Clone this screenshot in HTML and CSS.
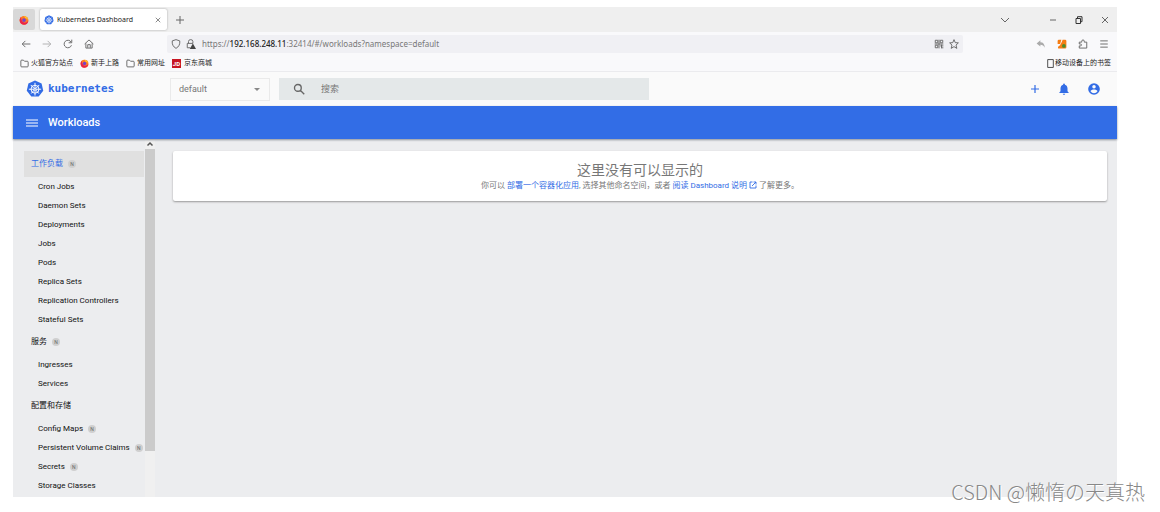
FILE: index.html
```html
<!DOCTYPE html>
<html lang="zh-CN">
<head>
<meta charset="utf-8">
<title>Kubernetes Dashboard</title>
<link rel="stylesheet" href="styles.css">
</head>
<body>
<svg class="defs" aria-hidden="true">
  <symbol id="helm" viewBox="0 0 24 24">
    <path fill="#326ce5" d="M12 .6l8.8 4.2 2.2 9.5-6.1 7.6H7.100L1 14.300l2.200-9.500z"/>
    <g fill="none" stroke="#fff" stroke-width="1.300"><circle cx="12" cy="12.300" r="5.300"/><circle cx="12" cy="12.300" r="1.400"/>
    <path d="M12 11V3.800M12 13.700v7M10.700 12.300H3.800M13.300 12.300h6.900M11 11.300L6.300 6.600M13 11.300l4.700-4.700M11 13.300L7 18M13 13.300l4 4.700"/></g>
  </symbol>
  <symbol id="folder" viewBox="0 0 16 16"><path fill="none" stroke="#555" stroke-width="1.500" d="M1.500 3.500q0-1.500 1.500-1.500h3l2 2h5q1.500 0 1.500 1.500v7q0 1.500-1.500 1.500H3q-1.500 0-1.500-1.500z"/></symbol>
  <symbol id="fox" viewBox="0 0 16 16"><circle cx="8" cy="8.500" r="7" fill="#ff7a22"/><path fill="#e8224c" d="M1 7q0 8 7 8.500Q14 15 15 9q-3 4-7 3T3 3z"/><path fill="#ffc928" d="M8 1q6 2 7 7-2-3-5-3z"/><circle cx="8" cy="8" r="3" fill="#7542c8"/></symbol>
</svg>
<div class="window">
  <div class="tabs">
    <button class="fox-view" aria-label="Firefox View"><svg class="i10"><use href="#fox"/></svg></button>
    <div class="tab"><svg class="i10"><use href="#helm"/></svg><span class="tab-title">Kubernetes Dashboard</span>
      <button class="icon-btn" aria-label="关闭标签页"><svg class="i6" viewBox="0 0 8 8"><path class="line" d="M1 1l6 6M7 1L1 7"/></svg></button></div>
    <button class="icon-btn new-tab" aria-label="新标签页"><svg class="i8" viewBox="0 0 8 8"><path class="line" d="M4 0v8M0 4h8"/></svg></button>
    <div class="win-ctl">
      <button class="icon-btn" aria-label="列出标签页"><svg class="i8" viewBox="0 0 8 8"><path class="line" d="M0 2l4 4 4-4"/></svg></button>
      <button class="icon-btn gap-before" aria-label="最小化"><svg class="i8" viewBox="0 0 8 8"><path class="line" d="M1 4h6"/></svg></button>
      <button class="icon-btn" aria-label="还原"><svg class="i8" viewBox="0 0 8 8"><path class="line dark" d="M1 2.500h4.500v5H1zM2.500 2.500V.700H7v5H5.500"/></svg></button>
      <button class="icon-btn" aria-label="关闭"><svg class="i8" viewBox="0 0 8 8"><path class="line" d="M1 1l6 6M7 1L1 7"/></svg></button>
    </div>
  </div>
  <div class="toolbar">
    <div class="nav-btns">
      <button class="icon-btn" aria-label="后退"><svg class="i10" viewBox="0 0 16 16"><path class="line2" d="M15 8H2M7 3L2 8l5 5"/></svg></button>
      <button class="icon-btn faint" aria-label="前进"><svg class="i10" viewBox="0 0 16 16"><path class="line2" d="M1 8h13M9 3l5 5-5 5"/></svg></button>
      <button class="icon-btn" aria-label="刷新"><svg class="i10" viewBox="0 0 16 16"><path class="line2" d="M13.500 10A6 6 0 1 1 13 5M14 1v5H9"/></svg></button>
      <button class="icon-btn" aria-label="主页"><svg class="i10" viewBox="0 0 16 16"><path class="line2" d="M1 8l7-6.500L15 8M3 7v7.500h10V7M6 14V9h4v5"/></svg></button>
    </div>
    <div class="url">
      <svg class="i10" viewBox="0 0 16 16"><path class="line2" d="M8 1l6 2q1 8-6 12Q1 11 2 3z"/></svg>
      <svg class="i10" viewBox="0 0 16 16"><path class="line2" d="M4 7V4q0-3 3.500-3T11 4v3M7 14H2V7h9"/><path fill="#444" d="M11 7l5 9H6z"/></svg>
      <div class="url-text" role="textbox" aria-label="网址" contenteditable="true" spellcheck="false">https://<b>192.168.248.11</b>:32414/#/workloads?namespace=default</div>
      <button class="icon-btn" aria-label="二维码"><svg class="i10" viewBox="0 0 16 16"><path class="line2" d="M2 2h4v4H2zM10 2h4v4h-4zM2 10h4v4H2zM8 1v14M1 8h14M10 11h5M12 9v6M14 13v2"/></svg></button>
      <button class="icon-btn" aria-label="添加书签"><svg class="i10" viewBox="0 0 16 16"><path class="line2" d="M8 1l2 4.800 5 .400-3.800 3.500L12.500 15 8 12.200 3.500 15l1.300-5.300L1 6.200l5-.400z"/></svg></button>
    </div>
    <div class="ext">
      <button class="icon-btn" aria-label="撤销"><svg class="i10" viewBox="0 0 16 16"><path fill="#aaa" d="M7 2v3q7 0 7 9-2-5-7-5v3L1 7z"/></svg></button>
      <button class="icon-btn" aria-label="扩展"><svg class="i10" viewBox="0 0 16 16"><path fill="#f57c12" d="M3 1h4L5 8H1V3q0-2 2-2zM9 1h4q2 0 2 2v10q0 2-2 2H2q-1-1 0-3 4-2 7-11z"/><circle cx="11" cy="11" r="3" fill="#4c8b2b"/></svg></button>
      <button class="icon-btn" aria-label="附加组件"><svg class="i10" viewBox="0 0 16 16"><path class="line2" d="M2 5h4V3.500a2 2 0 0 1 4 0V5h4v9.500H2V11h2a1.500 1.500 0 0 0 0-3H2z"/></svg></button>
      <button class="icon-btn" aria-label="菜单"><svg class="i10" viewBox="0 0 16 16"><path class="line2" d="M2 3h12M2 8h12M2 13h12"/></svg></button>
    </div>
  </div>
  <nav class="bookmarks" aria-label="书签">
    <a href="#"><svg class="i9"><use href="#folder"/></svg>火狐官方站点</a>
    <a href="#"><svg class="i9"><use href="#fox"/></svg>新手上路</a>
    <a href="#"><svg class="i9"><use href="#folder"/></svg>常用网址</a>
    <a href="#"><span class="jd">JD</span>京东商城</a>
    <a href="#" class="mobile"><svg class="i9" viewBox="0 0 16 16"><path class="line2 dark" d="M3 1h10v14H3z"/></svg>移动设备上的书签</a>
  </nav>
  <header class="header">
    <a class="brand" href="#"><svg class="i18"><use href="#helm"/></svg>kubernetes</a>
    <div class="ns"><select aria-label="命名空间"><option>default</option></select><i class="caret"></i></div>
    <label class="search"><svg class="i12" viewBox="0 0 16 16"><path fill="none" stroke="#666" stroke-width="1.800" d="M10 10l5 5M11 6.500a4.500 4.500 0 1 1-9 0 4.500 4.500 0 0 1 9 0z"/></svg><input type="search" placeholder="搜索" aria-label="搜索"></label>
    <div class="actions">
      <button class="icon-btn" aria-label="创建"><svg class="i12" viewBox="0 0 24 24"><path fill="#326ce5" d="M20 13.200h-6.800V20h-2.400v-6.800H4v-2.400h6.800V4h2.400v6.800H20z"/></svg></button>
      <button class="icon-btn" aria-label="通知"><svg class="i14" viewBox="0 0 24 24"><path fill="#326ce5" d="M12 22c1.100 0 2-.900 2-2h-4c0 1.100.900 2 2 2zm6-6v-5c0-3.070-1.640-5.640-4.500-6.320V4a1.500 1.500 0 0 0-3 0v.680C7.630 5.360 6 7.920 6 11v5l-2 2v1h16v-1z"/></svg></button>
      <button class="icon-btn" aria-label="用户"><svg class="i14" viewBox="0 0 24 24"><path fill="#326ce5" d="M12 2a10 10 0 1 0 0 20 10 10 0 0 0 0-20zm0 3a3 3 0 1 1 0 6 3 3 0 0 1 0-6zm0 14.200a7.200 7.200 0 0 1-6-3.220c.030-1.990 4-3.080 6-3.080s5.970 1.090 6 3.080a7.200 7.200 0 0 1-6 3.220z"/></svg></button>
    </div>
  </header>
  <div class="titlebar">
    <button class="icon-btn" aria-label="切换导航"><svg class="i12" viewBox="0 0 12 12"><path stroke="#fff" stroke-width="1.200" d="M0 3h12M0 6h12M0 9h12"/></svg></button>
    <h1>Workloads</h1>
  </div>
  <div class="main">
    <nav class="side">
      <a class="group active" href="#">工作负载<span class="n">N</span></a>
      <a href="#">Cron Jobs</a><a href="#">Daemon Sets</a><a href="#">Deployments</a><a href="#">Jobs</a><a href="#">Pods</a><a href="#">Replica Sets</a><a href="#">Replication Controllers</a><a href="#">Stateful Sets</a>
      <a class="group" href="#">服务<span class="n">N</span></a>
      <a href="#">Ingresses</a><a href="#">Services</a>
      <a class="group" href="#">配置和存储</a>
      <a href="#">Config Maps<span class="n">N</span></a><a href="#">Persistent Volume Claims<span class="n">N</span></a><a href="#">Secrets<span class="n">N</span></a><a href="#">Storage Classes</a>
    </nav>
    <div class="scroll"><svg class="i10" viewBox="0 0 10 10"><path fill="none" stroke="#555" stroke-width="1.500" d="M2.500 6.500L5 4l2.500 2.500"/></svg><div class="thumb"></div></div>
    <main class="content">
      <section class="card">
        <h2>这里没有可以显示的</h2>
        <p>你可以 <a href="#">部署一个容器化应用</a>, 选择其他命名空间，或者 <a href="#">阅读 Dashboard 说明 <svg class="i8" viewBox="0 0 16 16"><path fill="none" stroke="#326ce5" stroke-width="1.800" d="M7 2H2v12h12V9M9 2h5v5M14 2L6 10"/></svg></a> 了解更多。</p>
      </section>
    </main>
  </div>
</div>
<div class="watermark">CSDN @懒惰の天真热</div>
</body>
</html>
```

FILE: styles.css
```css
* { box-sizing: border-box; }
body {
  margin: 0;
  min-height: 100vh;
  padding: 7px 43px 15px 13px;
  display: flex;
  background: #fff;
  color: #222;
  font: 8px/12px Roboto, "Noto Sans CJK SC", sans-serif;
}
.defs { position: absolute; width: 0; height: 0; }
a { color: inherit; text-decoration: none; }
svg { flex: none; display: block; }
.i6 { width: 6px; height: 6px; }
.i8 { width: 8px; height: 8px; }
.i9 { width: 9px; height: 9px; }
.i10 { width: 10px; height: 10px; }
.i12 { width: 12px; height: 12px; }
.i14 { width: 14px; height: 14px; }
.i18 { width: 18px; height: 18px; }
.line { fill: none; stroke: #666; stroke-width: 1; }
.line2 { fill: none; stroke: #666; stroke-width: 1.5; }
.dark { stroke: #333; }
.faint { opacity: .5; }
button, select, input { font: inherit; color: inherit; border: 0; background: none; padding: 0; margin: 0; outline: 0; }
.icon-btn { display: flex; align-items: center; justify-content: center; }

.window { flex: 1; min-width: 0; display: flex; flex-direction: column; background: #ecedef; }
.tabs { display: flex; align-items: center; height: 25px; background: #efefef; font-family: "Noto Sans", "Noto Sans CJK SC", sans-serif; font-size: 7px; }
.fox-view { width: 22px; height: 21px; display: grid; place-items: center; background: #d8d8d8; border-radius: 2px; }
.tab { display: flex; align-items: center; gap: 3px; width: 127px; height: 21px; margin-left: 5px; padding: 0 6px 0 4px; background: #fff; border-radius: 2px; box-shadow: 0 0 2px #999; }
.tab-title { flex: 1; color: #222; white-space: nowrap; }
.new-tab { margin-left: 9px; }
.win-ctl { display: flex; gap: 18px; margin-left: auto; padding-right: 8px; }
.gap-before { margin-left: 22px; }

.toolbar { display: flex; align-items: center; height: 23px; background: #f9f9fb; }
.nav-btns { display: flex; gap: 11px; width: 154px; padding-left: 8px; }
.url { flex: 1; display: flex; align-items: center; gap: 5px; height: 18px; padding: 0 4px; background: #f0f0f4; border-radius: 2px; color: #777; font-family: "Noto Sans", sans-serif; }
.url-text { flex: 1; margin-left: 1px; outline: 0; white-space: nowrap; }
.url-text b { color: #222; font-weight: 500; }
.ext { display: flex; gap: 11px; padding: 0 8px 0 73px; }

.bookmarks { display: flex; gap: 7px; align-items: center; height: 17px; padding: 0 6px 0 7px; background: #f9f9fb; border-bottom: 1px solid #ebebee; font-size: 7px; }
.bookmarks a { display: flex; align-items: center; gap: 2px; white-space: nowrap; }
.bookmarks .mobile { margin-left: auto; gap: 0; }
.jd { width: 9px; height: 9px; background: #c81623; color: #fff; font-size: 6px; line-height: 9px; font-weight: 700; text-align: center; margin-right: 1px; }

.header { display: flex; align-items: center; height: 34px; background: #fafafa; }
.brand { display: flex; align-items: center; gap: 4px; width: 157px; padding-left: 13px; color: #326ce5; font: bold 11px/18px "DejaVu Sans Mono", monospace; }
.ns { display: flex; align-items: center; width: 100px; height: 23px; padding: 0 9px 0 8px; border: 1px solid #eaeaea; color: #777; font-size: 9px; }
.ns select { flex: 1; appearance: none; }
.caret { border: 3px solid transparent; border-top-color: #888; border-bottom: 0; }
.search { flex: 0 1 370px; display: flex; align-items: center; gap: 16px; height: 22px; margin-left: 9px; padding: 0 14px; background: #e4e8e9; color: #777; font-size: 9px; }
.search input { flex: 1; min-width: 0; appearance: none; }
.search input::placeholder { color: #777; opacity: 1; }
.actions { display: flex; gap: 16px; margin-left: auto; padding-right: 16px; }

.titlebar { display: flex; align-items: center; gap: 10px; height: 33px; padding-left: 13px; background: #326de6; color: #fff; box-shadow: 0 1px 2px #8a8f99; z-index: 1; }
.titlebar h1 { margin: 0; font-size: 11px; line-height: 14px; font-weight: 500; }

.main { flex: 1; display: flex; }
.side { display: flex; flex-direction: column; width: 132px; padding: 12px 1px 0 11px; color: #111; }
.side a { display: flex; align-items: center; gap: 5px; height: 19px; padding-left: 14px; white-space: nowrap; }
.side .group { height: 26px; padding-left: 7px; }
.side .active { background: #e0e0e0; color: #326ce5; }
.n { flex: none; width: 8px; height: 8px; border-radius: 50%; background: #cfcfcf; color: #666; font-size: 5px; line-height: 8px; text-align: center; }
.scroll { display: flex; flex-direction: column; width: 10px; background: #f0f0f0; }
.thumb { height: 302px; background: #cbcbcb; }
.content { flex: 1; padding: 12px 10px 12px 18px; }
.card { padding: 9px 8px; background: #fff; border-radius: 2px; box-shadow: 0 1px 2px #999; text-align: center; color: #777; }
.card h2 { margin: 0; font-size: 14px; line-height: 20px; font-weight: 400; }
.card p { margin: 0; }
.card a { color: #326ce5; }
.card svg { display: inline-block; vertical-align: -1px; }

.watermark { position: absolute; right: 15px; bottom: 6px; color: #888; font: 300 20px/28px "Noto Sans CJK SC", sans-serif; text-shadow: 1px 1px 0 #fff; }
```
